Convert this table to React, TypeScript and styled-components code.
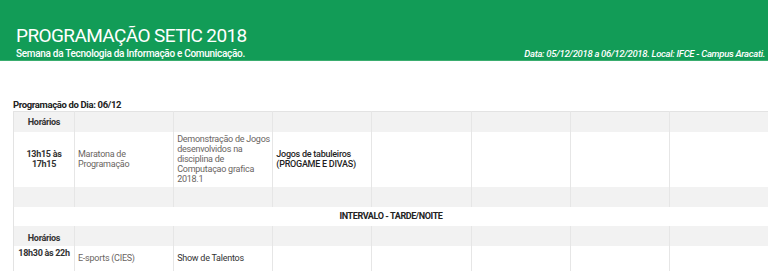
import React from 'react'
import styled, { createGlobalStyle } from 'styled-components'

const GlobalStyle = createGlobalStyle`
  html, body {
    margin: 0;
    padding: 0;
    background: #ffffff;
    font-family: Roboto, "Liberation Sans", Arial, sans-serif;
    overflow: hidden;
  }
`

const COLUMNS = 8

type Tone = 'muted' | 'strong' | 'plain'

interface Activity {
  text: React.ReactNode
  tone: Tone
}

const afternoon: Activity[] = [
  { text: <>Maratona de<br />Programação</>, tone: 'muted' },
  {
    text: <>Demonstração de Jogos<br />desenvolvidos na<br />disciplina de<br />Computaçao grafica<br />2018.1</>,
    tone: 'muted',
  },
  { text: <>Jogos de tabuleiros<br />(PROGAME E DIVAS)</>, tone: 'strong' },
]

const night: Activity[] = [
  { text: 'E-sports (CIES)', tone: 'muted' },
  { text: 'Show de Talentos', tone: 'plain' },
]

const fill = (list: Activity[]) =>
  Array.from({ length: COLUMNS - 1 }, (_, i) => list[i] ?? null)

const App = () => {
  return (
    <>
      <GlobalStyle />
      <Header>
        <Title>PROGRAMAÇÃO SETIC 2018</Title>
        <SubRow>
          <Subtitle>Semana da Tecnologia da Informação e Comunicação.</Subtitle>
          <Info>Data: 05/12/2018 a 06/12/2018. Local: IFCE - Campus Aracati.</Info>
        </SubRow>
      </Header>

      <Main>
        <DayTitle>Programação do Dia: 06/12</DayTitle>
        <Table>
          <tbody>
            <Row $shade>
              <HeadCell>Horários</HeadCell>
              {fill([]).map((_, i) => <Cell key={i} />)}
            </Row>
            <Row>
              <TimeCell>13h15 às<br />17h15</TimeCell>
              {fill(afternoon).map((item, i) => (
                <Cell key={i} $tone={item?.tone}>{item?.text}</Cell>
              ))}
            </Row>
            <Row $shade>
              <Cell />
              {fill([]).map((_, i) => <Cell key={i} />)}
            </Row>
            <Row $height={19}>
              <BreakCell colSpan={COLUMNS}>INTERVALO - TARDE/NOITE</BreakCell>
            </Row>
            <Row $shade>
              <HeadCell $valign="bottom">Horários</HeadCell>
              {fill([]).map((_, i) => <Cell key={i} />)}
            </Row>
            <Row $height={26}>
              <TimeCell $valign="top">18h30 às 22h</TimeCell>
              {fill(night).map((item, i) => (
                <Cell key={i} $tone={item?.tone} $marked={i === 0}>{item?.text}</Cell>
              ))}
            </Row>
          </tbody>
        </Table>
      </Main>
    </>
  )
}

const Header = styled.header`
  background: #129c57;
  border-bottom: 1px solid #3aad6f;
  color: #ffffff;
  padding: 25px 3px 0 16px;
  height: 35px;
`

const Title = styled.h1`
  margin: 0;
  font-size: 19px;
  font-weight: 400;
  line-height: 22px;
  letter-spacing: -0.6px;
`

const SubRow = styled.div`
  display: flex;
  justify-content: space-between;
  align-items: baseline;
  line-height: 13px;
`

const Subtitle = styled.span`
  font-size: 10px;
  font-weight: 500;
  letter-spacing: -0.3px;
`

const Info = styled.span`
  font-size: 9.5px;
  font-weight: 500;
  font-style: italic;
  letter-spacing: -0.3px;
`

const Main = styled.main`
  padding: 39px 0 0 13px;
`

const DayTitle = styled.div`
  font-size: 9.5px;
  font-weight: 700;
  line-height: 10px;
  letter-spacing: -0.35px;
  color: #222222;
  margin: 0 0 1px 0;
`

const Table = styled.table`
  border-collapse: collapse;
  table-layout: fixed;
  width: 756px;
  border-left: 1px solid #e3e3e3;
  border-top: 1px solid #e3e3e3;
  font-size: 9px;
  line-height: 10.2px;
  letter-spacing: -0.25px;

  td, th {
    box-sizing: border-box;
    padding: 2px 3px;
    white-space: nowrap;
    border-right: 1px solid #e6e6e6;
  }

  td:first-child,
  th:first-child {
    width: 61px;
  }
`

const Row = styled.tr<{ $shade?: boolean; $height?: number }>`
  background: ${p => (p.$shade ? '#f2f2f2' : '#ffffff')};
  height: ${p => p.$height ?? 20}px;
`

const Cell = styled.td<{ $tone?: Tone; $marked?: boolean }>`
  vertical-align: middle;
  border-left: ${p => (p.$marked ? '1px solid #333333' : '1px solid #e6e6e6')};
  color: ${p => (p.$tone === 'strong' ? '#1f1f1f' : p.$tone === 'plain' ? '#333333' : '#6a655f')};
  font-weight: ${p => (p.$tone === 'strong' ? 500 : 400)};
`

const HeadCell = styled.th<{ $valign?: string }>`
  vertical-align: ${p => p.$valign ?? 'middle'};
  text-align: center;
  font-size: 9px;
  font-weight: 700;
  letter-spacing: -0.3px;
  color: #333333;
`

const TimeCell = styled.td<{ $valign?: string }>`
  vertical-align: ${p => p.$valign ?? 'middle'};
  text-align: center;
  font-size: 9px;
  font-weight: 700;
  letter-spacing: -0.3px;
  color: #333333;
`

const BreakCell = styled.td`
  text-align: center;
  font-size: 9px;
  font-weight: 700;
  letter-spacing: -0.4px;
  color: #222222;
`

export default App
